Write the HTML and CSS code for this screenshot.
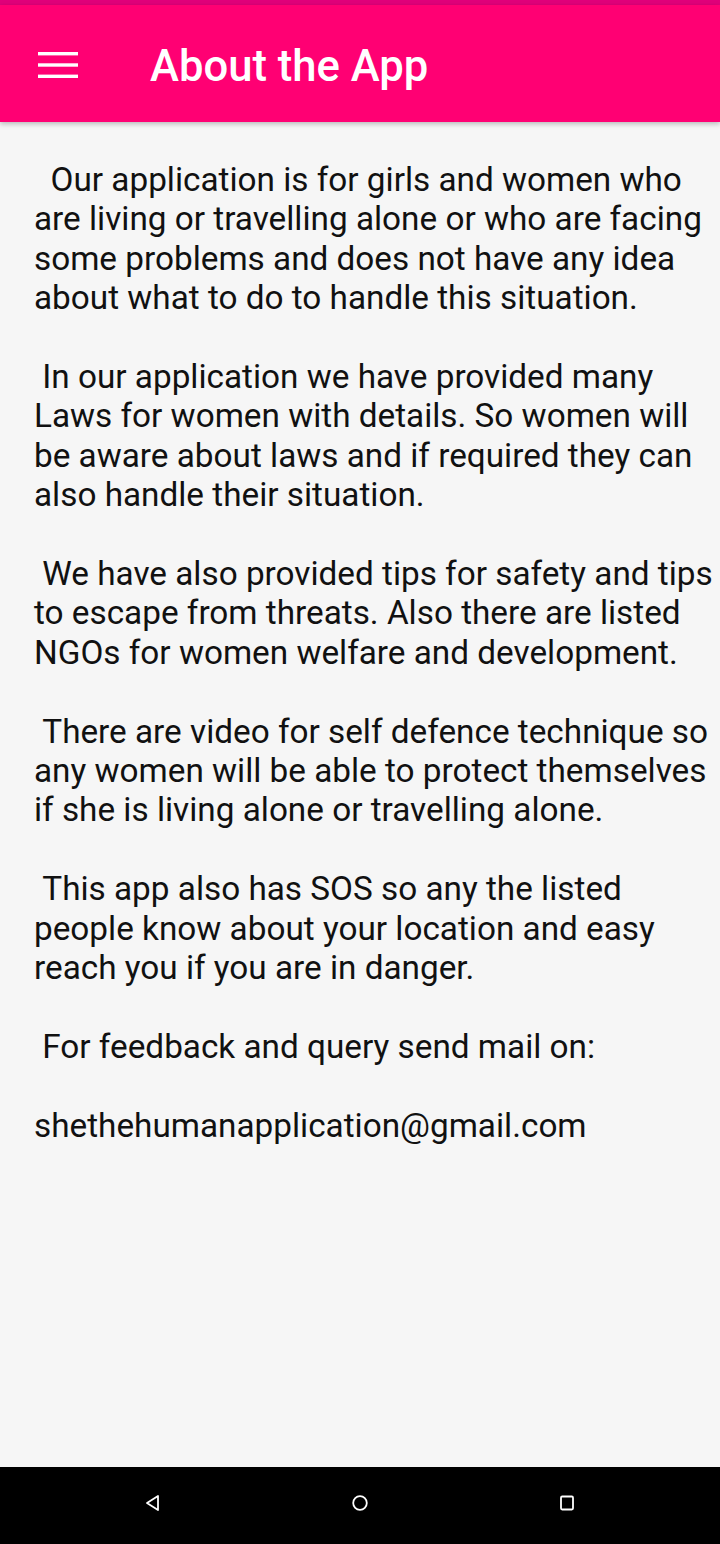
FILE: index.html
```html
<!DOCTYPE html>
<html>
<head>
<meta charset="utf-8">
<link rel="stylesheet" href="styles.css">
</head>
<body>
<div class="screen">
  <div class="statusbar"></div>
  <header class="toolbar">
    <svg class="menu" width="40" height="26" viewBox="0 0 40 26">
      <rect x="0" y="0" width="40" height="3.4" fill="#fff"/>
      <rect x="0" y="11.3" width="40" height="3.4" fill="#fff"/>
      <rect x="0" y="22.6" width="40" height="3.4" fill="#fff"/>
    </svg>
    <h1 class="title">About the App</h1>
  </header>
  <main class="content">
    <p class="para">&nbsp; Our application is for girls and women who<br>are living or travelling alone or who are facing<br>some problems and does not have any idea<br>about what to do to handle this situation.</p>
    <p class="para">&nbsp;In our application we have provided many<br>Laws for women with details. So women will<br>be aware about laws and if required they can<br>also handle their situation.</p>
    <p class="para">&nbsp;We have also provided tips for safety and tips<br>to escape from threats. Also there are listed<br>NGOs for women welfare and development.</p>
    <p class="para">&nbsp;There are video for self defence technique so<br>any women will be able to protect themselves<br>if she is living alone or travelling alone.</p>
    <p class="para">&nbsp;This app also has SOS so any the listed<br>people know about your location and easy<br>reach you if you are in danger.</p>
    <p class="para">&nbsp;For feedback and query send mail on:</p>
    <p class="para">shethehumanapplication@gmail.com</p>
  </main>
  <nav class="navbar">
    <svg width="20" height="20" viewBox="0 0 20 20"><path d="M15 3 L15 17 L4 10 Z" fill="none" stroke="#fff" stroke-width="1.8" stroke-linejoin="round"/></svg>
    <svg width="20" height="20" viewBox="0 0 20 20"><circle cx="10" cy="10" r="6.8" fill="none" stroke="#fff" stroke-width="1.8"/></svg>
    <svg width="20" height="20" viewBox="0 0 20 20"><rect x="4" y="3.5" width="12" height="13" rx="1.2" fill="none" stroke="#fff" stroke-width="1.8"/></svg>
  </nav>
</div>
</body>
</html>
```
FILE: styles.css
```css
html, body {
  margin: 0;
  padding: 0;
}
body {
  font-family: Roboto, "Noto Sans", sans-serif;
  background: #f5f5f5;
}
.screen {
  width: 720px;
  height: 1544px;
  display: flex;
  flex-direction: column;
  overflow: hidden;
}
.statusbar {
  height: 5px;
  background: #e0007a;
}
.toolbar {
  height: 117px;
  background: #ff0073;
  display: flex;
  align-items: center;
  padding-left: 38px;
  box-shadow: 0 2px 5px rgba(0,0,0,0.25);
  position: relative;
  z-index: 1;
}
.menu {
  display: block;
  margin-top: 2px;
}
.title {
  margin: 5px 0 0 72px;
  font-size: 43.6px;
  font-weight: 500;
  color: #fff;
}
.content {
  flex: 1;
  padding: 38px 4px 0 34px;
  font-size: 33.3px;
  line-height: 39.4px;
  color: #111;
  background: #f6f6f6;
}
.para {
  margin: 0 0 39.4px 0;
  white-space: nowrap;
}
.navbar {
  height: 77px;
  background: #000;
  display: flex;
  align-items: center;
  padding: 0 143px 5px;
  box-sizing: border-box;
  justify-content: space-between;
}
```
